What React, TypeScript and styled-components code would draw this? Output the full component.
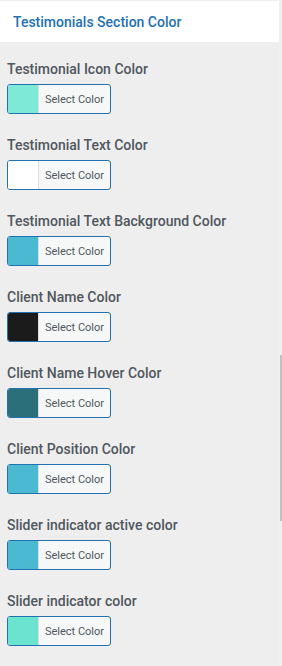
import styled, { createGlobalStyle } from 'styled-components'

const items = [
  { label: 'Testimonial Icon Color', color: '#7fe9d7' },
  { label: 'Testimonial Text Color', color: '#ffffff' },
  { label: 'Testimonial Text Background Color', color: '#4bb9d1' },
  { label: 'Client Name Color', color: '#1b1b1b' },
  { label: 'Client Name Hover Color', color: '#2a6f79' },
  { label: 'Client Position Color', color: '#4bb9d1' },
  { label: 'Slider indicator active color', color: '#4bb9d1' },
  { label: 'Slider indicator color', color: '#6ae4ce' },
]

export default function App() {
  return (
    <>
      <Global />
      <Page>
        <Main>
          <Header>
            <Title>Testimonials Section Color</Title>
          </Header>
          <List>
            {items.map((item) => (
              <Control key={item.label}>
                <Label>{item.label}</Label>
                <ColorButton>
                  <Swatch $color={item.color} />
                  <ButtonText>Select Color</ButtonText>
                </ColorButton>
              </Control>
            ))}
          </List>
        </Main>
        <Gutter>
          <Thumb />
        </Gutter>
      </Page>
    </>
  )
}

const Global = createGlobalStyle`
  html, body {
    margin: 0;
    padding: 0;
    background: #eeeeee;
  }
  body {
    font-family: Roboto, "Liberation Sans", sans-serif;
  }
`

const Page = styled.div`
  display: flex;
  width: 282px;
  height: 666px;
  background: #eeeeee;
  overflow: hidden;
`

const Main = styled.div`
  width: 279px;
  padding-top: 1px;
  display: flex;
  flex-direction: column;
`

const Header = styled.div`
  background: #ffffff;
  height: 41px;
  display: flex;
  align-items: center;
  padding-left: 13px;
`

const Title = styled.div`
  color: #2271b1;
  font-size: 14px;
  font-weight: 500;
`

const List = styled.div`
  display: flex;
  flex-direction: column;
  gap: 21px;
  padding: 17px 0 0 7px;
`

const Control = styled.div`
  display: flex;
  flex-direction: column;
  align-items: flex-start;
  gap: 5px;
`

const Label = styled.div`
  color: #50575e;
  font-size: 14px;
  font-weight: 500;
  line-height: 20px;
`

const ColorButton = styled.div`
  display: flex;
  width: 104px;
  height: 30px;
  box-sizing: border-box;
  border: 1px solid #2271b1;
  border-radius: 3px;
  overflow: hidden;
  background: #f6f7f7;
`

const Swatch = styled.div<{ $color: string }>`
  width: 30px;
  background: ${(p) => p.$color};
  border-right: 1px solid #dcdcde;
`

const ButtonText = styled.div`
  flex: 1;
  display: flex;
  align-items: center;
  justify-content: center;
  font-size: 11px;
  color: #50575e;
`

const Gutter = styled.div`
  width: 3px;
  background: #f0f0f0;
  display: flex;
  justify-content: flex-end;
`

const Thumb = styled.div`
  width: 2px;
  height: 166px;
  margin-top: 355px;
  background: #c1c1c1;
`
